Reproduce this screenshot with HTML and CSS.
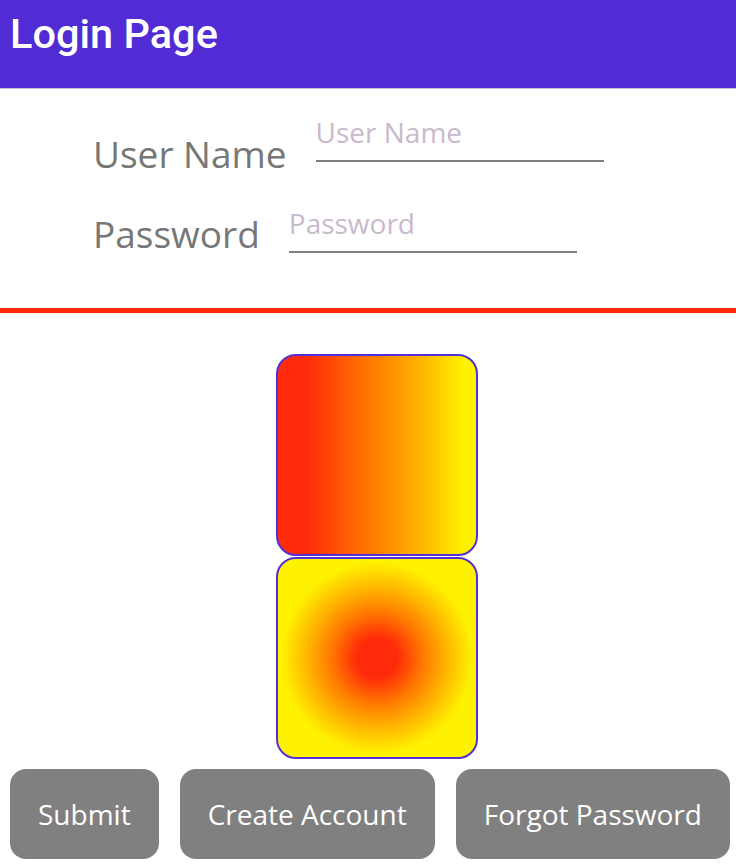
FILE: index.html
```html
<!DOCTYPE html>
<html lang="en">
<head>
<meta charset="utf-8">
<title>Login Page</title>
<link rel="stylesheet" href="styles.css">
</head>
<body>
<header class="appbar">
  <h1 class="title">Login Page</h1>
</header>
<main>
  <section class="form">
    <div class="row row-user">
      <label class="label" for="user">User Name</label>
      <input class="entry" id="user" type="text" placeholder="User Name">
    </div>
    <div class="row row-pass">
      <label class="label" for="pass">Password</label>
      <input class="entry" id="pass" type="password" placeholder="Password">
    </div>
  </section>
  <div class="divider"></div>
  <section class="swatches">
    <div class="swatch swatch-linear"></div>
    <div class="swatch swatch-radial"></div>
  </section>
  <div class="actions">
    <button class="btn" type="button">Submit</button>
    <button class="btn" type="button">Create Account</button>
    <button class="btn" type="button">Forgot Password</button>
  </div>
</main>
</body>
</html>
```
FILE: styles.css
```css
html, body {
  margin: 0;
  padding: 0;
  background: #ffffff;
}
body {
  font-family: "Open Sans", "Liberation Sans", sans-serif;
}
.appbar {
  height: 88px;
  box-sizing: border-box;
  background: #512bd4;
  padding: 10px 0 0 10px;
  box-shadow: 0 1px 0 #c8c4d4;
}
.title {
  margin: 0;
  font-family: Roboto, "Noto Sans", sans-serif;
  font-weight: 500;
  font-size: 41.5px;
  line-height: 48px;
  color: #ffffff;
}
.form {
  padding: 26px 0 50px 93px;
  display: flex;
  flex-direction: column;
  gap: 27px;
}
.row {
  display: flex;
  align-items: flex-start;
  gap: 29px;
}
.label {
  font-size: 37px;
  line-height: 48px;
  color: #777777;
}
.row-user .label { margin-top: 16px; }
.row-pass .label { margin-top: 5px; }
.entry {
  width: 288px;
  height: 36px;
  margin: 0;
  padding: 0 0 10px 0;
  border: none;
  border-bottom: 2px solid #808080;
  background: transparent;
  font-family: "Open Sans", "Liberation Sans", sans-serif;
  font-size: 28px;
  line-height: 36px;
  color: #333333;
  outline: none;
}
.entry::placeholder {
  color: #c9b9cc;
  opacity: 1;
}
.divider {
  height: 5px;
  background: #ff2a0a;
}
.swatches {
  padding: 41px 0 0 276px;
  display: flex;
  flex-direction: column;
  gap: 1px;
}
.swatch {
  width: 202px;
  height: 202px;
  box-sizing: border-box;
  border: 2px solid #5530d6;
  border-radius: 20px;
}
.swatch-linear {
  background: linear-gradient(to right, #ff2a0a 14%, #ff7800 46%, #ffb400 72%, #fff200 94%);
}
.swatch-radial {
  background: radial-gradient(circle closest-side, #ff2a0a 20%, #ff7800 46%, #ffb400 70%, #fff200 97%);
}
.actions {
  display: flex;
  gap: 21px;
  padding: 10px 0 0 10px;
}
.btn {
  height: 90px;
  padding: 0 28px;
  border: none;
  border-radius: 16px;
  background: #808080;
  color: #ffffff;
  font-family: "Open Sans", "Liberation Sans", sans-serif;
  font-size: 28px;
  line-height: 36px;
}
```
